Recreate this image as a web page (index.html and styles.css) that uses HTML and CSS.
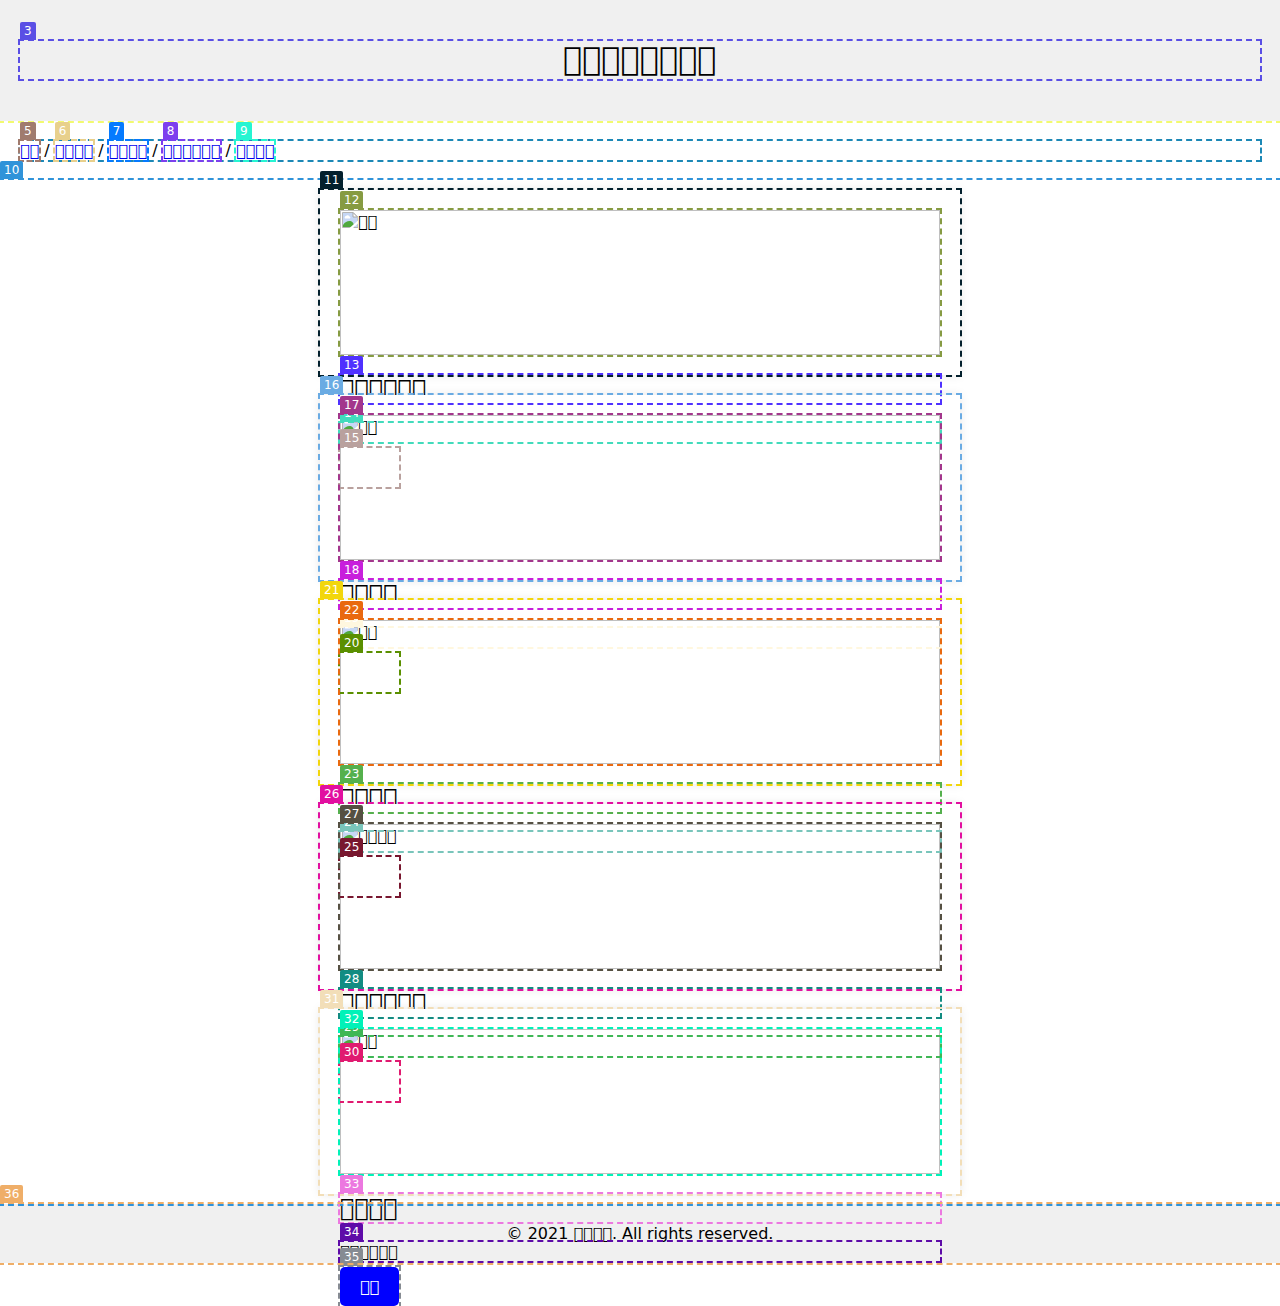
FILE: index.html
```
<!DOCTYPE html>
<html lang="zh">
<head>
<meta charset="utf-8">
<title>&#xE900;&#xE900;&#xE900;&#xE900;</title>
<link rel="stylesheet" href="styles.css">
</head>
<body>
<svg class="sprite" aria-hidden="true">
  <symbol id="broken" viewBox="0 0 16 16">
    <path d="M.5.5h10.500l5 5v10H.5z" fill="#c6d7f5" stroke="#b4b4b4"/>
    <path d="M11 .5v4.500h4.500z" fill="#fff" stroke="#a8a8a8"/>
    <path d="M3 6.500a1.500 1.500 0 0 1 1-2.500 2 2 0 0 1 3.500.5 1.200 1.200 0 0 1 .5 2z" fill="#fff"/>
    <path d="M1 15v-2c2-3 4-4 6.500-4s4 1.500 5 6z" fill="#4fa83d"/>
    <path d="M7.500 16 16 8.500V11.500l-5 4.500z" fill="#fff"/>
  </symbol>
</svg>

<header class="header">
  <h1 class="title">&#xE900;&#xE900;&#xE900;&#xE900;&#xE900;&#xE900;&#xE900;&#xE900;<span class="mark c3"><b>3</b></span></h1>
  <span class="mark c2"></span>
</header>

<nav class="nav">
  <div class="crumbs"><span class="mark c4"></span><a href="#">&#xE900;&#xE900;<span class="mark c5"><b>5</b></span></a> / <a href="#">&#xE900;&#xE900;&#xE900;&#xE900;<span class="mark c6"><b>6</b></span></a> / <a href="#">&#xE900;&#xE900;&#xE900;&#xE900;<span class="mark c7"><b>7</b></span></a> / <a href="#">&#xE900;&#xE900;&#xE900;&#xE900;&#xE900;&#xE900;<span class="mark c8"><b>8</b></span></a> / <a href="#">&#xE900;&#xE900;&#xE900;&#xE900;<span class="mark c9"><b>9</b></span></a></div>
</nav>

<main class="cards">
  <span class="mark c10"><b>10</b></span>
  <article class="card">
    <span class="mark c11"><b>11</b></span>
    <div class="picture"><svg><use href="#broken"/></svg><span>&#xE900;&#xE900;</span><span class="mark c12"><b>12</b></span></div>
    <h2>&#xE900;&#xE900;&#xE900;&#xE900;&#xE900;&#xE900;<span class="mark c13"><b>13</b></span></h2>
    <p>&#xE900;&#xE900;&#xE900;&#xE900;&#xE900;&#xE900;<span class="mark c14"><b>14</b></span></p>
    <button class="button" type="button">&#xE900;&#xE900;<span class="mark c15"><b>15</b></span></button>
  </article>
  <article class="card">
    <span class="mark c16"><b>16</b></span>
    <div class="picture"><svg><use href="#broken"/></svg><span>&#xE900;&#xE900;</span><span class="mark c17"><b>17</b></span></div>
    <h2>&#xE900;&#xE900;&#xE900;&#xE900;<span class="mark c18"><b>18</b></span></h2>
    <p>&#xE900;&#xE900;&#xE900;&#xE900;&#xE900;&#xE900;<span class="mark c19"><b>19</b></span></p>
    <button class="button" type="button">&#xE900;&#xE900;<span class="mark c20"><b>20</b></span></button>
  </article>
  <article class="card">
    <span class="mark c21"><b>21</b></span>
    <div class="picture"><svg><use href="#broken"/></svg><span>&#xE900;&#xE900;</span><span class="mark c22"><b>22</b></span></div>
    <h2>&#xE900;&#xE900;&#xE900;&#xE900;<span class="mark c23"><b>23</b></span></h2>
    <p>&#xE900;&#xE900;&#xE900;&#xE900;&#xE900;&#xE900;<span class="mark c24"><b>24</b></span></p>
    <button class="button" type="button">&#xE900;&#xE900;<span class="mark c25"><b>25</b></span></button>
  </article>
  <article class="card">
    <span class="mark c26"><b>26</b></span>
    <div class="picture"><svg><use href="#broken"/></svg><span>&#xE900;&#xE900;&#xE900;&#xE900;</span><span class="mark c27"><b>27</b></span></div>
    <h2>&#xE900;&#xE900;&#xE900;&#xE900;&#xE900;&#xE900;<span class="mark c28"><b>28</b></span></h2>
    <p>&#xE900;&#xE900;&#xE900;&#xE900;&#xE900;&#xE900;<span class="mark c29"><b>29</b></span></p>
    <button class="button" type="button">&#xE900;&#xE900;<span class="mark c30"><b>30</b></span></button>
  </article>
  <article class="card">
    <span class="mark c31"><b>31</b></span>
    <div class="picture"><svg><use href="#broken"/></svg><span>&#xE900;&#xE900;</span><span class="mark c32"><b>32</b></span></div>
    <h2>&#xE900;&#xE900;&#xE900;&#xE900;<span class="mark c33"><b>33</b></span></h2>
    <p>&#xE900;&#xE900;&#xE900;&#xE900;&#xE900;&#xE900;<span class="mark c34"><b>34</b></span></p>
    <button class="button" type="button">&#xE900;&#xE900;<span class="mark c35"><b>35</b></span></button>
  </article>
</main>

<footer class="footer">
  <p>© 2021 &#xE900;&#xE900;&#xE900;&#xE900;. All rights reserved.</p>
  <div class="mark-frame"><span class="mark c36"><b>36</b></span></div>
</footer>
</body>
</html>
```
FILE: styles.css
```
* { box-sizing: border-box; }

body {
  min-height: 100vh;
  margin: 0;
  background: #fff;
  color: #000;
  font: 16px/19px "DejaVu Sans", sans-serif;
}

.sprite { position: absolute; width: 0; height: 0; }

/* Numbered annotation frames, each attached to the element it outlines */
.mark {
  position: absolute;
  inset: 0;
  z-index: 1;
  outline: 2px dashed var(--c);
  pointer-events: none;
}

.mark b {
  position: absolute;
  top: -19px;
  left: 0;
  padding: 2px 4px;
  border-radius: 2px 2px 0 0;
  background: var(--c);
  color: #fff;
  font-size: 12px;
  font-weight: normal;
  line-height: 14px;
}

.header {
  position: relative;
  padding: 20px;
  background: #f0f0f0;
  text-align: center;
}

.title {
  position: relative;
  margin: 21px 0 22px;
  padding-bottom: 1px;
  font-size: 32px;
  font-weight: normal;
  line-height: 37px;
}

.nav { padding: 20px; }
.crumbs { position: relative; }
.crumbs a {
  position: relative;
  display: inline-block;
  color: #00e;
  text-decoration: none;
}

.cards {
  position: relative;
  display: flex;
  flex-direction: column;
  align-items: center;
  height: 1024px;
}

.card {
  position: relative;
  flex: 1 1 0;
  min-height: 0;
  width: 100%;
  max-width: 640px;
  margin: 10px;
  padding: 20px;
  background: #fff;
  box-shadow: 0 0 10px rgba(0, 0, 0, .1);
}

.picture {
  position: relative;
  display: flex;
  height: 100%;
  padding: 1px;
  border: 1px solid #c0c0c0;
}

.picture svg { width: 16px; height: 16px; }
.picture .mark { inset: -1px; }

.card h2 {
  position: relative;
  margin: 20px 0;
  font-size: 24px;
  font-weight: normal;
  line-height: 28px;
}

.card p {
  position: relative;
  margin: 0 0 6px;
}

.button {
  position: relative;
  display: block;
  padding: 10px 20px;
  border: 0;
  border-radius: 5px;
  background: #00f;
  color: #fff;
  font: inherit;
}

.footer {
  padding: 20px;
  background: #f0f0f0;
  text-align: center;
}

.footer p { margin: 0; }

.mark-frame {
  position: relative;
  height: 59px;
  margin: -39px -20px -20px;
}

.c2 { --c: #f2fa70; }
.c3 { --c: #5a4fe5; }
.c4 { --c: #1c88b6; }
.c5 { --c: #a07b6e; }
.c6 { --c: #e8d08c; }
.c7 { --c: #057aff; }
.c8 { --c: #7d3fee; }
.c9 { --c: #26f5d2; }
.c10 { --c: #3093d9; }
.c11 { --c: #03202d; }
.c12 { --c: #869b42; }
.c13 { --c: #4f31ff; }
.c14 { --c: #42dbbc; }
.c15 { --c: #b9a19e; }
.c16 { --c: #6aabe3; }
.c17 { --c: #a3368c; }
.c18 { --c: #c81fdc; }
.c19 { --c: #fff7df; }
.c20 { --c: #5a8f00; }
.c21 { --c: #f2d60c; }
.c22 { --c: #e9690f; }
.c23 { --c: #55b04d; }
.c24 { --c: #79c5bb; }
.c25 { --c: #78172f; }
.c26 { --c: #e20fa0; }
.c27 { --c: #555042; }
.c28 { --c: #128c82; }
.c29 { --c: #3fb755; }
.c30 { --c: #e01a70; }
.c31 { --c: #f2deb8; }
.c32 { --c: #00f2b8; }
.c33 { --c: #ec78e0; }
.c34 { --c: #5e0ba8; }
.c35 { --c: #868b92; }
.c36 { --c: #efae68; }
```
